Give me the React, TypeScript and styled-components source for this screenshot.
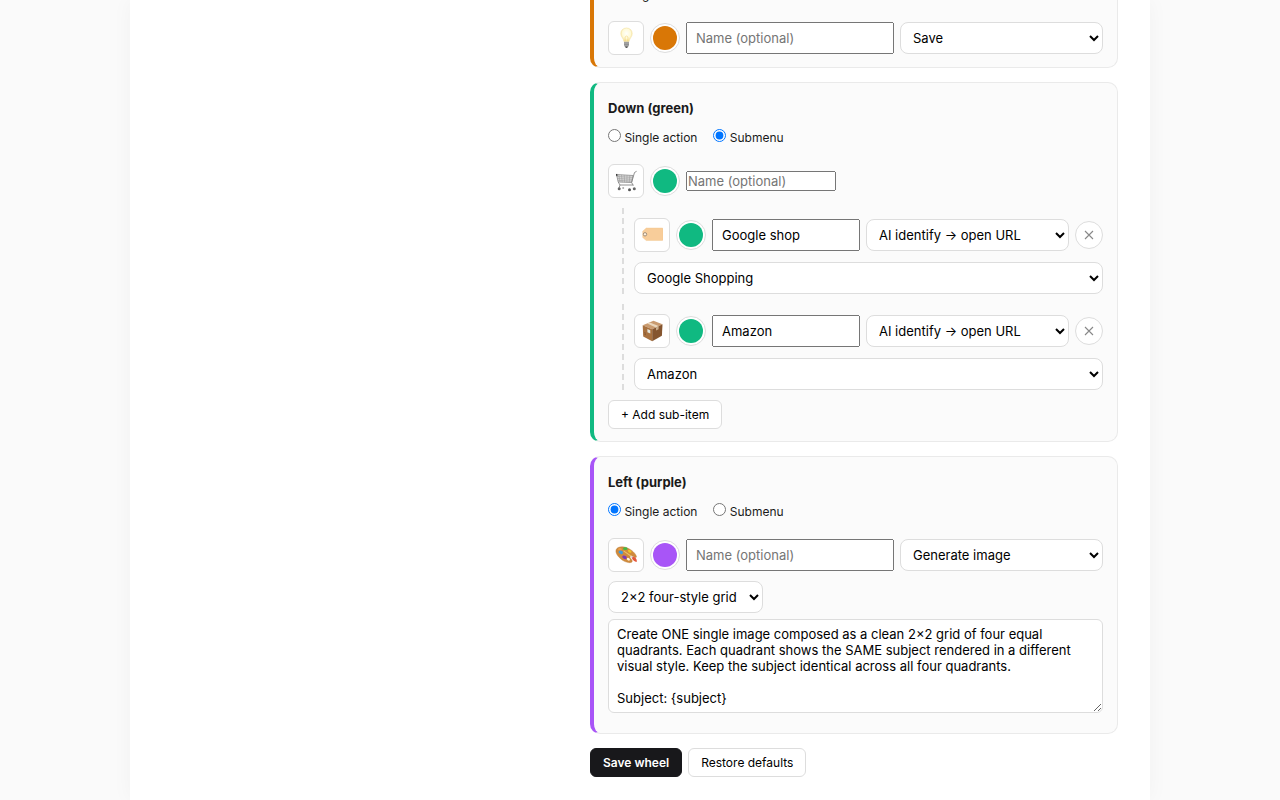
import React, { useId, useState } from "react";
import styled, { createGlobalStyle } from "styled-components";

const GlobalStyle = createGlobalStyle`
  *, *::before, *::after { box-sizing: border-box; }
  body {
    margin: 0;
    background: #fafafa;
    color: #1a1a1a;
    font-family: Inter, "Liberation Sans", sans-serif;
    font-size: 13px;
  }
`;

const Page = styled.div`
  display: flow-root;
  max-width: 1020px;
  min-height: 100vh;
  margin: 0 auto;
  padding: 0 32px 23px;
  overflow: clip;
  overflow-clip-margin: 40px;
  background: #fff;
  box-shadow: 0 0 20px rgba(0, 0, 0, 0.04);
`;

const Columns = styled.div`
  display: grid;
  grid-template-columns: 400px minmax(0, 1fr);
  column-gap: 28px;
`;

const Editor = styled.main`
  grid-column: 2;
  display: flex;
  flex-direction: column;
  gap: 14px;
  margin-top: -28px;
`;

const Card = styled.section<{ $accent: string }>`
  padding: 12px 14px;
  border: 1px solid #eaeaea;
  border-left: 4px solid ${(p) => p.$accent};
  border-radius: 10px;
  background: #fbfbfb;
`;

const CardTitle = styled.h3`
  margin: 4px 0 11px;
  font-size: 13px;
  font-weight: 700;
  line-height: 18px;
`;

const ModeRow = styled.div`
  display: flex;
  gap: 16px;
  margin-bottom: 16px;
  font-size: 12px;
  line-height: 20px;

  input {
    width: 13px;
    height: 13px;
    margin: 0;
  }
`;

const Row = styled.div`
  display: flex;
  align-items: center;
  gap: 6px;
`;

const IconButton = styled.button`
  display: grid;
  place-items: center;
  flex: none;
  width: 36px;
  height: 34px;
  padding: 0;
  border: 1px solid #ddd;
  border-radius: 6px;
  background: #fff;
`;

const Swatch = styled.input`
  flex: none;
  appearance: none;
  width: 30px;
  height: 30px;
  padding: 2px;
  border: 1px solid #ddd;
  border-radius: 50%;
  background: #fff;

  &::-webkit-color-swatch-wrapper { padding: 0; }
  &::-webkit-color-swatch { border: none; border-radius: 50%; }
`;

const NameInput = styled.input<{ $compact?: boolean }>`
  ${(p) => (p.$compact ? "width: 150px; padding: 0;" : "flex: 1; min-width: 0; padding: 6px 8px;")}
  font: 13px/16px Inter, "Liberation Sans", sans-serif;
`;

const Select = styled.select<{ $width?: string }>`
  flex: none;
  width: ${(p) => p.$width ?? "203px"};
  height: 32px;
  padding: 0 8px;
  border: 1px solid #ddd;
  border-radius: 8px;
  background: #fff;
  color: #000;
  font: 13px Inter, "Liberation Sans", sans-serif;
`;

const SubItem = styled.div`
  display: flex;
  flex-direction: column;
  gap: 10px;
  margin: 10px 0 10px 14px;
  padding: 10px 0 0 10px;
  border-left: 2px dashed #ddd;
`;

const RemoveButton = styled.button`
  display: grid;
  place-items: center;
  flex: none;
  width: 28px;
  height: 28px;
  padding: 0;
  border: 1px solid #ddd;
  border-radius: 50%;
  background: #fff;
  color: #888;
`;

const Button = styled.button<{ $primary?: boolean }>`
  height: 29px;
  padding: 0 12px;
  border: 1px solid ${(p) => (p.$primary ? "#18181b" : "#ddd")};
  border-radius: 6px;
  background: ${(p) => (p.$primary ? "#18181b" : "#fff")};
  color: ${(p) => (p.$primary ? "#fff" : "#000")};
  font: ${(p) => (p.$primary ? 600 : 400)} 12px Inter, "Liberation Sans", sans-serif;
`;

const ImageOptions = styled.div`
  display: flex;
  flex-direction: column;
  gap: 6px;
  margin: 9px 0 8px;
`;

const Prompt = styled.textarea`
  display: block;
  width: 100%;
  padding: 6px 8px;
  border: 1px solid #ddd;
  border-radius: 6px;
  background: #fff;
  color: #000;
  font: 13px/16px Inter, "Liberation Sans", sans-serif;
  resize: vertical;
`;

const BulbIcon = () => (
  <svg width="22" height="22" viewBox="0 0 22 22" aria-hidden="true">
    <defs>
      <radialGradient id="bulbGlow" cx="50%" cy="40%" r="60%">
        <stop offset="0" stopColor="#fffffa" />
        <stop offset="0.6" stopColor="#fffad8" />
        <stop offset="1" stopColor="#f6dc8a" />
      </radialGradient>
    </defs>
    <path d="M11.500 1C8.100 1 5.800 3.400 5.800 6.600C5.800 9.600 8.500 11.300 9 14.700H14C14.500 11.300 17.200 9.600 17.200 6.600C17.200 3.400 14.900 1 11.500 1Z" fill="url(#bulbGlow)" stroke="#f3e2a6" strokeWidth="0.600" />
    <path d="M10.300 14L10 10L11.500 9L13 10L12.700 14" fill="none" stroke="#f0cf70" strokeWidth="0.500" />
    <path d="M9 14.700H14V18.500L12.800 20.200H10.200L9 18.500Z" fill="#b0b0b0" />
    <path d="M9 16H14M9 17.500H14M9.800 19H13.200" stroke="#7d7d7d" strokeWidth="0.600" />
    <path d="M10.200 19.400H12.800L12.200 21H10.800Z" fill="#555" />
  </svg>
);

const CartIcon = () => (
  <svg width="22" height="22" viewBox="0 0 22 22" aria-hidden="true" fill="none">
    <path d="M1.500 4.500L18 5.500L16.600 12.500L3.200 12Z" fill="#dcdcdc" stroke="#8b8b8b" strokeWidth="0.800" />
    <path d="M3.800 4.700L5 12.100M6.500 4.900L7.200 12.300M9.200 5L9.600 12.300M12 5.200L11.900 12.400M14.900 5.300L14.200 12.500M1.800 6.500L17.700 7.400M2.300 8.500L17.300 9.300M2.800 10.400L16.900 11.200" stroke="#9a9a9a" strokeWidth="0.600" />
    <path d="M21.600 1.300L19.500 2.500L16.600 12.500L18.300 15.500M3.200 12L5 15H18.300M5 15L4 18" stroke="#858585" strokeWidth="0.900" />
    <path d="M1.500 4L2 6" stroke="#333" strokeWidth="1.200" />
    <circle cx="4.200" cy="18.700" r="1.500" fill="#666" />
    <circle cx="8.200" cy="18" r="1" fill="#aaa" />
    <circle cx="14.500" cy="19.800" r="1.500" fill="#555" />
    <circle cx="19.300" cy="18.700" r="1.500" fill="#666" />
  </svg>
);

const TagIcon = () => (
  <svg width="22" height="22" viewBox="0 0 22 22" aria-hidden="true">
    <path d="M5.200 4H21.200Q22 4 22 4.800V15.700Q22 16.500 21.200 16.500H5.200L1.700 13.500V7.200Z" fill="#f8cd9a" stroke="#f2c48c" strokeWidth="0.400" />
    <circle cx="4" cy="10.300" r="1.700" fill="#fff1dc" stroke="#8e7b69" strokeWidth="0.800" />
  </svg>
);

const BoxIcon = () => (
  <svg width="22" height="22" viewBox="0 0 22 22" aria-hidden="true">
    <path d="M1.700 5.200L12.500 0.800L21.500 4.300L11.200 9.200Z" fill="#c99b70" />
    <path d="M1.700 5.200L11.200 9.200V21.200L2.200 16.400Z" fill="#a8713f" />
    <path d="M11.200 9.200L21.500 4.300L20.900 15.800L11.200 21.200Z" fill="#85552f" />
    <path d="M6.200 3.400L8.700 2.400L17.600 6.100L15 7.400Z" fill="#ead7bd" />
    <path d="M15 7.400L17.600 6.100V9.200L15 10.500Z" fill="#c9ad8b" />
    <path d="M6.400 9.100L9.300 10.300V13.500L6.400 12.300Z" fill="#e5e7de" />
    <path d="M3.200 12.500L5 13.400M3.200 14L5 14.900" stroke="#6b4323" strokeWidth="0.500" />
  </svg>
);

const PaletteIcon = () => (
  <svg width="22" height="22" viewBox="0 0 22 22" aria-hidden="true">
    <path d="M1 6C2.200 2.500 7.500 1.900 12.300 3.900C17 5.900 20.600 9.500 21.400 12.300C21.700 13.700 20.400 14 18.800 12.800C17.100 11.400 14.700 11.500 15 13.200C15.300 14.500 18.300 16.500 17 17.900C15.200 19.800 9 18 5.300 14.500C2 11.500 0.400 8.500 1 6Z" fill="#d08b3c" stroke="#b87733" strokeWidth="0.400" />
    <ellipse cx="5" cy="5.300" rx="1.800" ry="1.200" fill="#e8a04c" />
    <ellipse cx="10.300" cy="4.700" rx="2.300" ry="1.400" fill="#42b944" />
    <ellipse cx="14.700" cy="7.300" rx="1.900" ry="1.300" fill="#edc527" transform="rotate(30 14.700 7.300)" />
    <ellipse cx="5.800" cy="8.300" rx="2.300" ry="1.700" fill="#3c9be0" transform="rotate(25 5.800 8.300)" />
    <ellipse cx="9.500" cy="13.300" rx="2.400" ry="1.600" fill="#7d39b6" transform="rotate(25 9.500 13.300)" />
    <ellipse cx="13.400" cy="15.200" rx="1.700" ry="1.200" fill="#fff6e6" transform="rotate(35 13.400 15.200)" />
    <path d="M8.800 6.500L17.600 12.500L17 13.500L8.300 7.300Z" fill="#ebc26d" />
    <path d="M17.300 12.300L20.300 13.500Q22.500 16 21.500 18Q18.500 17.500 16.700 13.800Z" fill="#e4573c" />
    <path d="M16.300 11.700L17.800 12.500L17 14.200L15.600 13.100Z" fill="#ddd" />
  </svg>
);

const CloseIcon = () => (
  <svg width="10" height="10" viewBox="0 0 10 10" aria-hidden="true">
    <path d="M1 1L9 9M9 1L1 9" stroke="currentColor" strokeWidth="1.100" fill="none" />
  </svg>
);

type Mode = "single" | "submenu";

function ModePicker({ initial }: { initial: Mode }) {
  const name = useId();
  const [mode, setMode] = useState<Mode>(initial);
  return (
    <ModeRow role="radiogroup">
      <label>
        <input type="radio" name={name} checked={mode === "single"} onChange={() => setMode("single")} /> Single action
      </label>
      <label>
        <input type="radio" name={name} checked={mode === "submenu"} onChange={() => setMode("submenu")} /> Submenu
      </label>
    </ModeRow>
  );
}

interface SlotProps {
  icon: React.ReactNode;
  color: string;
  name?: string;
  action?: string;
  compact?: boolean;
  removable?: boolean;
}

function Slot({ icon, color, name, action, compact, removable }: SlotProps) {
  return (
    <Row>
      <IconButton type="button" aria-label="Icon">{icon}</IconButton>
      <Swatch type="color" aria-label="Color" defaultValue={color} />
      <NameInput type="text" aria-label="Name" placeholder="Name (optional)" defaultValue={name} $compact={compact} />
      {action && (
        <Select aria-label="Action">
          <option>{action}</option>
        </Select>
      )}
      {removable && (
        <RemoveButton type="button" aria-label="Remove">
          <CloseIcon />
        </RemoveButton>
      )}
    </Row>
  );
}

const PROMPT = `Create ONE single image composed as a clean 2×2 grid of four equal quadrants. Each quadrant shows the SAME subject rendered in a different visual style. Keep the subject identical across all four quadrants.

Subject: {subject}`;

export default function App() {
  return (
    <>
      <GlobalStyle />
      <Page>
        <Columns>
          <Editor>
            <Card $accent="#d97706">
              <ModePicker initial="single" />
              <Slot icon={<BulbIcon />} color="#d97706" action="Save" />
            </Card>

            <Card $accent="#10b981">
              <CardTitle>Down (green)</CardTitle>
              <ModePicker initial="submenu" />
              <Slot icon={<CartIcon />} color="#10b981" compact />
              <SubItem>
                <Slot icon={<TagIcon />} color="#10b981" name="Google shop" action="AI identify → open URL" removable />
                <Select aria-label="Store" $width="100%">
                  <option>Google Shopping</option>
                </Select>
              </SubItem>
              <SubItem>
                <Slot icon={<BoxIcon />} color="#10b981" name="Amazon" action="AI identify → open URL" removable />
                <Select aria-label="Store" $width="100%">
                  <option>Amazon</option>
                </Select>
              </SubItem>
              <Button type="button">+ Add sub-item</Button>
            </Card>

            <Card $accent="#a855f7">
              <CardTitle>Left (purple)</CardTitle>
              <ModePicker initial="single" />
              <Slot icon={<PaletteIcon />} color="#a855f7" action="Generate image" />
              <ImageOptions>
                <Select aria-label="Image style" $width="155px">
                  <option>2×2 four-style grid</option>
                </Select>
                <Prompt aria-label="Prompt" rows={5} defaultValue={PROMPT} />
              </ImageOptions>
            </Card>

            <Row>
              <Button type="button" $primary>Save wheel</Button>
              <Button type="button">Restore defaults</Button>
            </Row>
          </Editor>
        </Columns>
      </Page>
    </>
  );
}
